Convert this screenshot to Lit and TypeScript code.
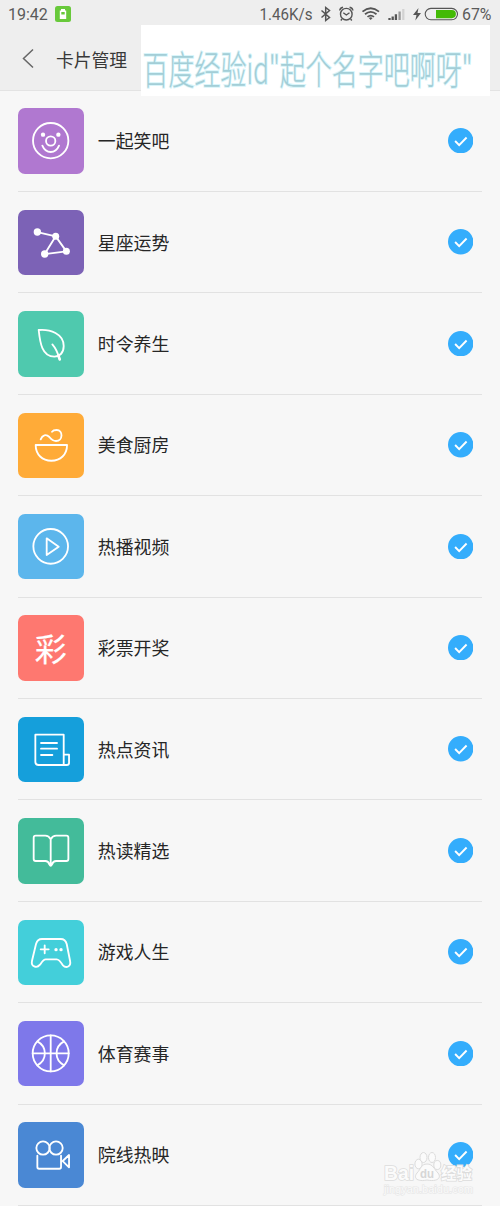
import { LitElement, html, css, svg } from "lit";
import { customElement } from "lit/decorators.js";
import { styleMap } from "lit/directives/style-map.js";

const cards = [
  { name: "一起笑吧", color: "#b078d0", icon: svg`<circle cx="98" cy="98" r="53"/><circle class="f" cx="75" cy="80" r="6.5"/><circle class="f" cx="121" cy="80" r="6.5"/><circle cx="98" cy="99" r="14"/><path d="M73 113Q81 132 98 132T123 113"/>` },
  { name: "星座运势", color: "#7c62b6", icon: svg`<path d="M58 66 113 79 145 124 80 132 113 79"/><circle class="f" cx="58" cy="66" r="11"/><circle class="f" cx="113" cy="79" r="10.500"/><circle class="f" cx="80" cy="132" r="11"/><circle class="f" cx="145" cy="124" r="10.500"/>` },
  { name: "时令养生", color: "#4fc9ae", icon: svg`<path d="M62 57C96 54 137 68 137 105C137 126 124 137 109 137C72 137 66 95 62 57Z"/><path d="M103 100Q117 116 125 145"/><path class="thick" d="M121 133 125 145"/>` },
  { name: "美食厨房", color: "#ffab38", icon: svg`<path d="M53 96H147C147 125 127 143 100 143S53 125 53 96Z"/><path d="M68 79C73 66 84 62 94 72C101 81 106 84 114 84C135 84 136 51 116 51C109 51 105 52 102 56"/>` },
  { name: "热播视频", color: "#5cb6ec", icon: svg`<circle cx="98" cy="97" r="52"/><path d="M86 73 122 98 86 123Z"/>` },
  { name: "彩票开奖", color: "#fe7870", icon: svg`<text class="glyph" x="50" y="139">彩</text>` },
  { name: "热点资讯", color: "#159fdb", icon: svg`<path d="M137 144H62Q52 144 52 134V53H137V144M137 113H153V138Q153 144 146 144H137M69 78H117M69 95H117M69 114H103"/>` },
  { name: "热读精选", color: "#43bb9a", icon: svg`<path d="M98 64Q92 53 82 53H53Q47 53 47 59V123Q47 129 53 129H82Q91 129 94 139Q98 147 102 139Q105 129 114 129H145Q151 129 151 123V59Q151 53 145 53H114Q104 53 98 64V142"/>` },
  { name: "游戏人生", color: "#43cfda", icon: svg`<path d="M72 57H128Q142 57 146 72L156 122C160 140 144 146 134 135C126 122 122 118 116 118H83C76 118 73 124 66 134C56 146 38 140 42 122L54 72Q58 57 72 57ZM68 88H92M80 76V100"/><circle class="f" cx="114" cy="89" r="5"/><circle class="f" cx="129" cy="89" r="5"/>` },
  { name: "体育赛事", color: "#7e78ea", icon: svg`<circle cx="98" cy="97" r="54"/><path d="M98 43V151M44 97H152M58 61C88 77 88 117 58 133M138 61C108 77 108 117 138 133"/>` },
  { name: "院线热映", color: "#4a88d4", icon: svg`<circle cx="75" cy="78" r="20"/><circle cx="114" cy="78" r="20"/><path d="M58 101V135Q58 140 63 140H124Q129 140 129 135V101M134 117 153 99V136Z"/>` },
];

@customElement("app-root")
export class AppRoot extends LitElement {
  static styles = css`
    :host {
      display: block;
      position: relative;
      height: 1206px;
      overflow: hidden;
      background: #f7f7f7;
      color: #262626;
      font-family: "Noto Sans CJK SC", sans-serif;
    }
    svg { display: block; flex: none; }
    header {
      box-sizing: border-box;
      height: 90.6px;
      background: #eeeeee;
      border-bottom: 1px solid #e3e3e3;
    }
    .status {
      display: flex;
      align-items: center;
      justify-content: space-between;
      height: 28px;
      padding: 0 8px;
      font: 16px/28px Roboto, sans-serif;
      color: #5a5a5a;
    }
    .left { display: flex; align-items: center; gap: 7px; }
    .left span { padding-top: 1px; }
    .title {
      display: flex;
      align-items: center;
      height: 62px;
      padding-left: 20px;
      gap: 20px;
      font-size: 17.8px;
      color: #383838;
    }
    .row {
      display: flex;
      align-items: center;
      box-sizing: border-box;
      height: 101.4px;
      margin: 0 18.4px;
      padding-right: 8.4px;
      border-bottom: 1px solid #e2e2e2;
    }
    .tile { width: 65.4px; height: 65.4px; border-radius: 7px; flex: none; margin-top: 0.8px; }
    .tile svg {
      width: 100%;
      height: 100%;
      fill: none;
      stroke: #fff;
      stroke-width: 5.5;
      stroke-linecap: round;
      stroke-linejoin: round;
    }
    .tile .f { fill: #fff; stroke: none; }
    .tile .thick { stroke-width: 8; }
    .tile .glyph { fill: #fff; stroke-width: 0.6; font-size: 96px; font-weight: 400; }
    .name { flex: 1; margin-left: 14px; margin-top: -1px; font-size: 17.9px; line-height: 26px; }
    .banner { position: absolute; left: 141px; top: 25px; background: #fff; overflow: visible; }
    .banner text { fill: #a3ced7; stroke: #d9f5fa; stroke-width: 2; paint-order: stroke; font-size: 39px; font-weight: 300; }
    .mark { position: absolute; left: 380px; top: 1148px; overflow: visible; }
    .mark text { paint-order: stroke; fill: #fbfbfb; stroke: #dcdcdc; stroke-width: 1.6; font-family: "Liberation Sans", "Noto Sans CJK SC", sans-serif; font-weight: 700; }
    .mark .du { fill: #d6d6d6; stroke: none; }
    .mark .url { fill: #fafafa; stroke: #e6e6e6; stroke-width: 1.2; font-weight: 400; }
  `;

  render() {
    return html`
      <header>
        <div class="status">
          <div class="left">
            <span>19:42</span>
            <svg width="16" height="16" viewBox="0 0 16 16"><rect width="16" height="16" rx="2.500" fill="#68c93b"/><path d="M6 3h4v1.500H11.200v8.500H4.800V4.500H6Z" fill="#fff"/><path d="M6.300 6h3.400v2.500H6.300Z" fill="#68c93b"/></svg>
          </div>
          <svg width="233" height="28" viewBox="259 0 233 28" fill="none" stroke="#555">
            <text x="259.500" y="20" font-size="16.500" fill="#5a5a5a" stroke="none" textLength="53" lengthAdjust="spacingAndGlyphs">1.46K/s</text>
            <path d="M321.500 10.500 329.500 17.500 325.700 20.500V7.500L329.500 10.500 321.500 17.500" stroke-width="1.500"/>
            <circle cx="346.300" cy="14.200" r="5.800" stroke-width="1.400"/>
            <path d="M343.300 12.700 346.300 15 349.500 12.700M339.700 10.500Q340 8 343 7.300M352.900 10.500Q352.600 8 349.600 7.300M342 19 340.800 20.500M350.600 19 351.800 20.500" stroke-width="1.400"/>
            <path d="M362.500 11.600Q370.700 4.800 379 11.600M365 14.300Q370.700 9.500 376.500 14.300M367.500 16.900Q370.700 14.300 374 16.900" stroke-width="1.800"/>
            <path d="M368.800 18.100Q370.700 16.600 372.600 18.100L370.700 20Z" fill="#555" stroke="none"/>
            <path d="M389.500 20V18M392.700 20V16.500M395.900 20V14.200" stroke-width="2.300"/><path d="M399.600 20V11.500" stroke="#999" stroke-width="2.300"/><path d="M403.300 20V9" stroke="#d2d2d2" stroke-width="2.300"/>
            <path d="M418.500 8 413 15H416.500L415.300 20.500 421 13H417.500Z" fill="#555" stroke="none"/>
            <rect x="425.200" y="8.400" width="32.300" height="11.400" rx="5.700" stroke-width="1.100"/>
            <path d="M436 10H451.800A4.100 4.100 0 0 1 451.800 18.200H436Z" fill="#43ba05" stroke="none"/>
            <text x="462" y="20" font-size="16.500" fill="#5a5a5a" stroke="none" textLength="29.500" lengthAdjust="spacingAndGlyphs">67%</text>
          </svg>
        </div>
        <div class="title">
          <svg width="16" height="22" viewBox="0 0 16 22" fill="none" stroke="#666" stroke-width="1.500"><path d="M13 1.500 3.500 10.500 13 19.500"/></svg>
          <span>卡片管理</span>
        </div>
      </header>
      ${cards.map(
        (c) => html`<div class="row">
          <div class="tile" style=${styleMap({ background: c.color })}><svg viewBox="0 0 196 196">${c.icon}</svg></div>
          <span class="name">${c.name}</span>
          <svg width="25.400" height="25.400" viewBox="0 0 25 25"><circle cx="12.500" cy="12.500" r="12.500" fill="#34adfc"/><path d="M7 12.800 11 16.800 18.300 9.400" fill="none" stroke="#fff" stroke-width="1.900"/></svg>
        </div>`
      )}
      <svg class="banner" width="349" height="71" viewBox="141 25 349 71">
        <text x="142.500" y="83.500" textLength="330" lengthAdjust="spacingAndGlyphs">百度经验id"起个名字吧啊呀"</text>
      </svg>
      <svg class="mark" width="110" height="50" viewBox="380 1148 110 50">
        <g fill="#fbfbfb" stroke="#dcdcdc" stroke-width="1">
          <ellipse cx="418.500" cy="1164" rx="3.600" ry="4.800"/><ellipse cx="423.500" cy="1157.500" rx="3.500" ry="5"/><ellipse cx="432" cy="1157.500" rx="3.500" ry="5"/><ellipse cx="437.300" cy="1165" rx="3.500" ry="4.500"/>
          <path d="M427 1164C421 1164 421 1169 417 1173C413 1178 417 1182 427 1180C437 1182 442 1178 438 1173C434 1169 433 1164 427 1164Z"/>
        </g>
        <text x="384" y="1180" font-size="20" textLength="30" lengthAdjust="spacingAndGlyphs">Bai</text>
        <text class="du" x="420" y="1178" font-size="13" textLength="14" lengthAdjust="spacingAndGlyphs">du</text>
        <text x="441" y="1179" font-size="16" textLength="31" lengthAdjust="spacingAndGlyphs">经验</text>
        <text class="url" x="384" y="1193" font-size="10.500" textLength="89" lengthAdjust="spacingAndGlyphs">jingyan.baidu.com</text>
      </svg>
    `;
  }
}
